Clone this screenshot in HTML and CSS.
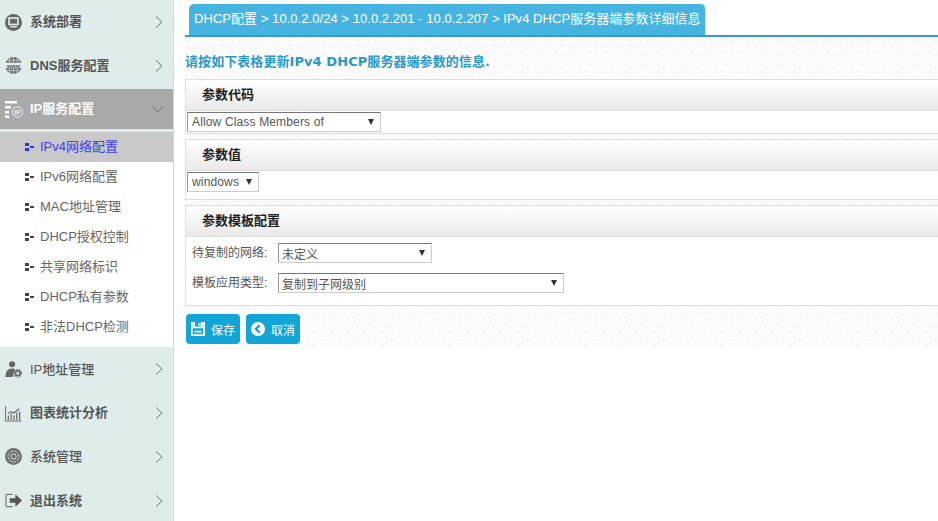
FILE: index.html
```html
<!DOCTYPE html>
<html lang="zh">
<head>
<meta charset="utf-8">
<title>IPv4 DHCP服务器端参数详细信息</title>
<link rel="stylesheet" href="styles.css">
</head>
<body>
<div class="app">
  <nav class="sidebar">
    <a class="nav-item nav-first">
      <svg class="nav-icon" viewBox="0 0 18 18"><circle cx="9" cy="9" r="9" fill="#666"/><rect x="4.300" y="4.300" width="9.400" height="6.800" fill="none" stroke="#deeceb" stroke-width="1.800"/><rect x="5.500" y="12.800" width="7" height="1.500" fill="#deeceb"/></svg>
      <span class="nav-label">系统部署</span>
      <svg class="chev" viewBox="0 0 8 12"><path d="M1 .5 7 6 1 11.500" fill="none" stroke="#777" stroke-width="1"/></svg>
    </a>
    <a class="nav-item nav-second">
      <svg class="nav-icon" viewBox="0 0 18 18"><circle cx="9" cy="9" r="9" fill="#6a6a6a"/><path d="M0 9h18" stroke="#deeceb" stroke-width="6"/><path d="M1 3.500h16M1 14.500h16M9 0v6M9 12v6M5.500 .5 4.500 6M12.500 .5 13.500 6M5.500 17.500 4.500 12M12.500 17.500 13.500 12" stroke="#deeceb" stroke-width=".7"/><text class="www" x="9" y="11.200" text-anchor="middle">www</text></svg>
      <span class="nav-label">DNS服务配置</span>
      <svg class="chev" viewBox="0 0 8 12"><path d="M1 .5 7 6 1 11.500" fill="none" stroke="#777" stroke-width="1"/></svg>
    </a>
    <a class="nav-item nav-active">
      <svg class="nav-icon nav-icon-wide" viewBox="0 0 18 18"><path d="M0 1h12v2.500H0zM0 6h6v2.500H0zM0 11h4v2.500H0zM0 15.500h4V18H0z" fill="#fff"/><circle cx="12.500" cy="12" r="5.200" fill="none" stroke="#eee" stroke-width="1"/><text class="ip" x="12.500" y="14.500" text-anchor="middle">IP</text></svg>
      <span class="nav-label">IP服务配置</span>
      <svg class="chev-down" viewBox="0 0 12 8"><path d="M.5 1 6 7 11.500 1" fill="none" stroke="#777" stroke-width="1"/></svg>
    </a>
    <ul class="subnav">
      <li class="sub-item sub-active"><i class="dots"></i>IPv4网络配置</li>
      <li class="sub-item"><i class="dots"></i>IPv6网络配置</li>
      <li class="sub-item"><i class="dots"></i>MAC地址管理</li>
      <li class="sub-item"><i class="dots"></i>DHCP授权控制</li>
      <li class="sub-item"><i class="dots"></i>共享网络标识</li>
      <li class="sub-item"><i class="dots"></i>DHCP私有参数</li>
      <li class="sub-item"><i class="dots"></i>非法DHCP检测</li>
    </ul>
    <a class="nav-item">
      <svg class="nav-icon" viewBox="0 0 18 18"><circle cx="7.500" cy="3.500" r="3.200" fill="#666"/><path d="M.5 17c0-6 2.500-9 7-9 1.500 0 2.500.4 3.300 1.200L8 17z" fill="#666"/><circle cx="13.500" cy="13" r="2.500" fill="none" stroke="#666" stroke-width="1.800"/><circle cx="13.500" cy="13" r="4.200" fill="none" stroke="#666" stroke-width="1.200" stroke-dasharray="1.500 1.500"/></svg>
      <span class="nav-label nav-thin">IP地址管理</span>
      <svg class="chev" viewBox="0 0 8 12"><path d="M1 .5 7 6 1 11.500" fill="none" stroke="#777" stroke-width="1"/></svg>
    </a>
    <a class="nav-item">
      <svg class="nav-icon" viewBox="0 0 18 18"><path d="M.5 1v16h17" fill="none" stroke="#666" stroke-width="1"/><path d="M3.500 16V11M6.500 16V9M9.500 16V11M12.500 16V8M15.500 16V7" stroke="#666" stroke-width="1.300"/><path d="M3 9 6.500 7 9.500 8.500 15 4" fill="none" stroke="#666" stroke-width="1.200"/></svg>
      <span class="nav-label">图表统计分析</span>
      <svg class="chev" viewBox="0 0 8 12"><path d="M1 .5 7 6 1 11.500" fill="none" stroke="#777" stroke-width="1"/></svg>
    </a>
    <a class="nav-item">
      <svg class="nav-icon" viewBox="0 0 18 18"><circle cx="9" cy="9" r="9" fill="#707070"/><circle cx="9" cy="9" r="5.800" fill="none" stroke="#deeceb" stroke-width="1" stroke-dasharray="2 1"/><circle cx="9" cy="9" r="2.800" fill="none" stroke="#deeceb" stroke-width="1"/></svg>
      <span class="nav-label nav-thin">系统管理</span>
      <svg class="chev" viewBox="0 0 8 12"><path d="M1 .5 7 6 1 11.500" fill="none" stroke="#777" stroke-width="1"/></svg>
    </a>
    <a class="nav-item">
      <svg class="nav-icon" viewBox="0 0 18 18"><path d="M8 2.500H2.500a1.500 1.500 0 0 0-1.500 1.500v10a1.500 1.500 0 0 0 1.500 1.500H8" fill="none" stroke="#777" stroke-width="1.300"/><path d="M5 6.500h6V2.500L18 9l-7 6.500v-4H5z" fill="#555"/></svg>
      <span class="nav-label">退出系统</span>
      <svg class="chev" viewBox="0 0 8 12"><path d="M1 .5 7 6 1 11.500" fill="none" stroke="#777" stroke-width="1"/></svg>
    </a>
  </nav>

  <main class="main">
    <header class="tabbar">
      <div class="tab">DHCP配置 &gt; 10.0.2.0/24 &gt; 10.0.2.201 - 10.0.2.207 &gt; IPv4 DHCP服务器端参数详细信息</div>
    </header>
    <div class="content">
      <p class="intro">请按如下表格更新IPv4 DHCP服务器端参数的信息.</p>

      <section class="panel">
        <h2 class="panel-head">参数代码</h2>
        <div class="panel-body body-code">
          <span class="select-wrap sel-code"><select class="sel"><option>Allow Class Members of</option></select></span>
        </div>
      </section>

      <section class="panel">
        <h2 class="panel-head">参数值</h2>
        <div class="panel-body body-value">
          <span class="select-wrap sel-value"><select class="sel"><option>windows</option></select></span>
        </div>
      </section>

      <section class="panel">
        <h2 class="panel-head">参数模板配置</h2>
        <div class="panel-body body-tpl">
          <div class="form-row">
            <label class="form-label">待复制的网络:</label>
            <span class="select-wrap sel-net"><select class="sel sel-cjk"><option>未定义</option></select></span>
          </div>
          <div class="form-row">
            <label class="form-label">模板应用类型:</label>
            <span class="select-wrap sel-type"><select class="sel sel-cjk"><option>复制到子网级别</option></select></span>
          </div>
        </div>
      </section>

      <div class="actions">
        <button class="btn" type="button">
          <svg class="btn-icon" viewBox="0 0 16 16"><path d="M1 1h2.500v5h9V1H15v14H1z" fill="none" stroke="#fff" stroke-width="2"/><path d="M8.500 1h2.500v3H8.500zM4 10h8v2H4z" fill="#fff"/></svg>
          <span>保存</span>
        </button>
        <button class="btn" type="button">
          <svg class="btn-icon" viewBox="0 0 16 16"><circle cx="8" cy="8" r="8" fill="#fff"/><path d="M9.800 3.800 5.600 8l4.200 4.200" fill="none" stroke="#12a5d6" stroke-width="2.600"/></svg>
          <span>取消</span>
        </button>
      </div>
    </div>
  </main>
</div>
</body>
</html>
```
FILE: styles.css
```css
* { box-sizing: border-box; }
html, body { margin: 0; height: 100%; overflow: hidden; background: #fff; }
body { font: 13px/1.2 "Liberation Sans", "Noto Sans CJK SC", sans-serif; color: #555; }

.app { display: flex; height: 521px; }

/* Sidebar */
.sidebar {
  width: 174px;
  flex: none;
  background: #deeceb;
  border-right: 1px solid #d2d6d6;
  display: flex;
  flex-direction: column;
}
.nav-item {
  height: 43.750px;
  flex: none;
  display: flex;
  align-items: center;
  padding: 1px 0 0 5px;
  color: #555;
}
.nav-first { height: 44px; padding-top: 0; }
.nav-second { height: 45px; padding: 0 0 2px 5px; }
.nav-icon { width: 17px; height: 17px; flex: none; margin-right: 8px; }
.nav-icon-wide { width: 18px; height: 18px; margin-right: 7px; }
.nav-label { flex: 1; font-weight: 700; font-size: 13px; }
.nav-thin { font-weight: 500; }
.chev { width: 8px; height: 12px; flex: none; margin-right: 10px; }
.chev-down { width: 12px; height: 8px; flex: none; margin-right: 9px; }
.www { font: 700 6px "Liberation Sans", sans-serif; fill: #5a5a5a; }
.ip { font: 700 6.500px "Liberation Sans", sans-serif; fill: #eee; }

.nav-active { height: 40px; padding-top: 0; background: #a9a9a9; color: #fff; }
.subnav {
  list-style: none;
  margin: 3px 0 0;
  padding: 0 0 5px;
  background: #fff;
}
.sub-item {
  height: 30px;
  display: flex;
  align-items: center;
  padding: 0 0 1px 25px;
  font-size: 13px;
  color: #666;
}
.sub-active { background: #c8c8c8; color: #3c3cf0; }
.dots {
  width: 9px;
  height: 8px;
  margin-right: 6px;
  flex: none;
  background:
    linear-gradient(currentColor, currentColor) 0 0 / 4px 3px no-repeat,
    linear-gradient(currentColor, currentColor) 0 100% / 4px 3px no-repeat,
    linear-gradient(currentColor, currentColor) 100% 50% / 4px 2px no-repeat;
  color: #444;
}
.sub-active .dots { color: #2233ee; }

/* Main */
.main { flex: 1; min-width: 0; padding-left: 11px; }
.tabbar {
  height: 37px;
  padding: 4px 0 0 4px;
  border-bottom: 2px solid #3a97d4;
}
.tab {
  width: 517px;
  height: 31px;
  background: #45b4e0;
  border-radius: 5px 5px 0 0;
  border-right: 1px solid #cfe3ee;
  color: #fff;
  line-height: 30px;
  padding-left: 5px;
  font-size: 13px;
  letter-spacing: .05px;
  white-space: nowrap;
}
.content {
  height: 312px;
  padding-top: 16px;
  background-color: #fbfbfb;
  background-image:
    radial-gradient(circle at 3px 4px, #f5f5f5 1px, transparent 1.500px),
    radial-gradient(circle at 10px 9px, #f6f6f6 1px, transparent 1.500px),
    radial-gradient(circle at 14px 2px, #f7f7f7 1px, transparent 1.500px);
  background-size: 17px 13px;
}
.intro {
  margin: 0 0 10px;
  height: 16px;
  line-height: 17px;
  font-family: "DejaVu Sans", "Noto Sans CJK SC", sans-serif;
  font-weight: 700;
  font-size: 13px;
  letter-spacing: .07px;
  color: #2a98c8;
}
.panel {
  margin: 0 -3px 5px 0;
  border: 1px solid #ddd;
  background: #fff;
}
.panel-head {
  margin: 0;
  height: 31px;
  padding-left: 16px;
  border-bottom: 1px solid #ddd;
  background: linear-gradient(#fff, #e9e9e9);
  font-size: 13px;
  line-height: 30px;
  font-weight: 700;
  color: #222;
}
.panel-body { background: #fff; }
.body-code { height: 22px; padding: 1px 0 0 1px; }
.body-value { height: 28px; padding: 1px 0 0 1px; }
.body-tpl { height: 68px; padding: 6px 0 0 6px; }

.select-wrap { position: relative; display: block; height: 20px; }
.select-wrap::after {
  content: "";
  position: absolute;
  top: 7px;
  right: 7px;
  border: 3px solid transparent;
  border-top: 6px solid #333;
  border-bottom: 0;
  pointer-events: none;
}
.sel-code { width: 194px; }
.sel-value { width: 72px; }
.sel-net { width: 154px; }
.sel-type { width: 286px; }
.sel {
  appearance: none;
  display: block;
  width: 100%;
  height: 20px;
  padding: 0 0 0 4px;
  margin: 0;
  border: 1px solid #ccc;
  border-top-color: #777;
  border-left-color: #999;
  border-radius: 0;
  background: #fff;
  color: #555;
  font: 12px "Liberation Sans", "Noto Sans CJK SC", sans-serif;
  letter-spacing: .15px;
}
.sel-cjk { font-size: 12px; padding: 3px 0 0 3px; letter-spacing: 0; }
.form-row { display: flex; align-items: center; height: 20px; margin-bottom: 10px; }
.form-label { width: 86px; flex: none; font-size: 12px; color: #555; }

/* Buttons */
.actions { display: flex; gap: 6px; margin: 8px 0 0 1px; }
.btn {
  width: 54px;
  height: 30px;
  border: 0;
  border-radius: 4px;
  padding: 0 0 0 5px;
  background: #12a5d6;
  color: #fff;
  font: 12px "Liberation Sans", "Noto Sans CJK SC", sans-serif;
  display: flex;
  align-items: center;
  gap: 6px;
}
.btn-icon { width: 14px; height: 14px; flex: none; }
```
